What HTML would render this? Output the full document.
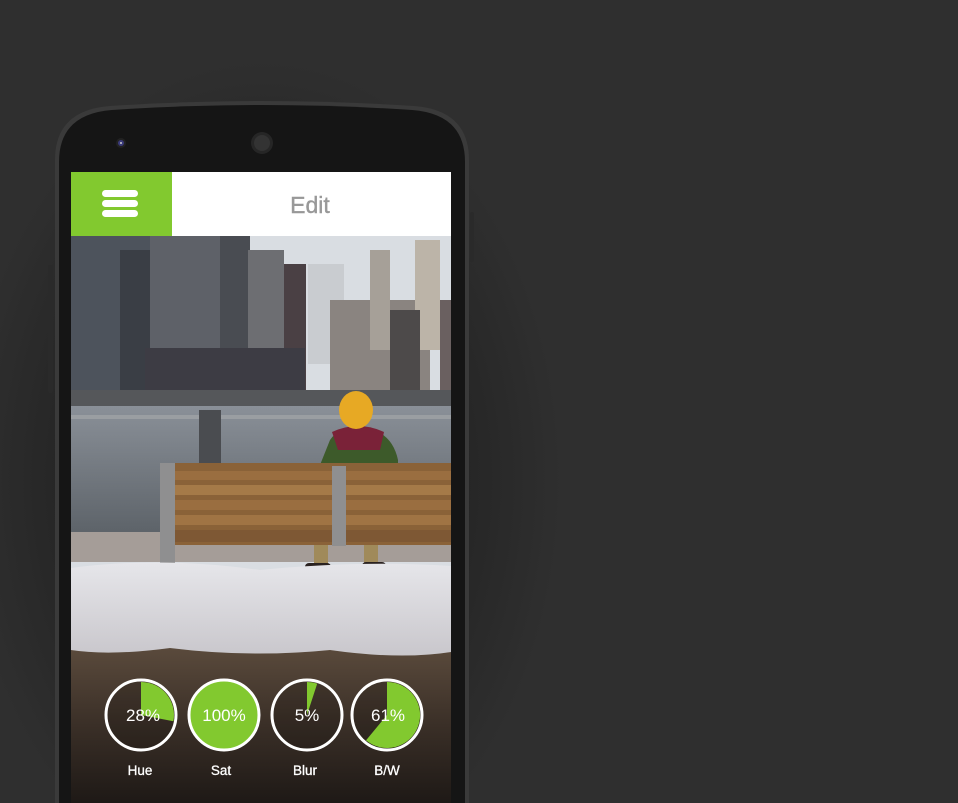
<!DOCTYPE html>
<html><head><style>
html,body{margin:0;padding:0;width:958px;height:803px;overflow:hidden;background:#2f2f2f;font-family:"Liberation Sans",sans-serif}
</style></head><body>
<svg width="958" height="803" viewBox="0 0 958 803" style="position:absolute;left:0;top:0">
<defs>
<radialGradient id="halo" cx="262" cy="480" r="1" gradientTransform="translate(262 480) scale(300 420) translate(-262 -480)" gradientUnits="userSpaceOnUse"><stop offset="0" stop-color="#1c1c1c"/><stop offset="0.6" stop-color="#242424"/><stop offset="1" stop-color="#2f2f2f"/></radialGradient>
<linearGradient id="ground" x1="0" y1="0" x2="0" y2="1"><stop offset="0" stop-color="#5a4a3c"/><stop offset="0.5" stop-color="#3a2f27"/><stop offset="1" stop-color="#1e1916"/></linearGradient>
<linearGradient id="water" x1="0" y1="0" x2="0" y2="1"><stop offset="0" stop-color="#8a9098"/><stop offset="1" stop-color="#5c6268"/></linearGradient>
<linearGradient id="snow" x1="0" y1="0" x2="0" y2="1"><stop offset="0" stop-color="#e6e6ea"/><stop offset="1" stop-color="#c9c7cc"/></linearGradient>
<clipPath id="scr"><rect x="71" y="236" width="380" height="567"/></clipPath>
</defs>
<rect width="958" height="803" fill="#2f2f2f"/>
<rect x="0" y="0" width="600" height="803" fill="url(#halo)"/>
<!-- phone -->
<path d="M55 803 V160 Q55 110 110 106 Q262 96 414 106 Q469 110 469 160 V803 Z" fill="#3a3a3a"/>
<path d="M59 803 V162 Q59 114 112 110 Q262 100 412 110 Q465 114 465 162 V803 Z" fill="#151515"/>
<rect x="48" y="265" width="5" height="128" rx="2" fill="#2a2a2a"/>
<rect x="470" y="212" width="4" height="50" rx="2" fill="#2a2a2a"/>
<circle cx="121" cy="143" r="5" fill="#222"/><circle cx="121" cy="143" r="3" fill="#3a3a7a"/><circle cx="121" cy="143" r="1" fill="#ccc"/>
<circle cx="262" cy="143" r="11" fill="#262626"/><circle cx="262" cy="143" r="8" fill="#333"/>
<!-- header -->
<rect x="71" y="172" width="380" height="64" fill="#fff"/>
<rect x="71" y="172" width="101" height="64" fill="#82c92f"/>
<rect x="102" y="190" width="36" height="7" rx="3.5" fill="#fff"/>
<rect x="102" y="200" width="36" height="7" rx="3.5" fill="#fff"/>
<rect x="102" y="210" width="36" height="7" rx="3.5" fill="#fff"/>
<text x="310" y="213" font-size="23" fill="#999" text-anchor="middle" font-family="Liberation Sans,sans-serif" stroke="#999" stroke-width="0.4">Edit</text>
<!-- photo -->
<g clip-path="url(#scr)">
<rect x="71" y="236" width="380" height="567" fill="#d9dde2"/>
<rect x="71" y="236" width="80" height="170" fill="#4d535c"/>
<rect x="120" y="250" width="30" height="150" fill="#3a3e45"/>
<rect x="150" y="236" width="98" height="170" fill="#5e6168"/>
<rect x="220" y="236" width="30" height="140" fill="#494c52"/>
<rect x="248" y="250" width="36" height="150" fill="#6d6e72"/>
<rect x="284" y="264" width="22" height="140" fill="#4a4044"/>
<rect x="308" y="264" width="36" height="100" fill="#c9ccd0"/>
<rect x="330" y="300" width="100" height="100" fill="#8a8480"/>
<rect x="370" y="250" width="20" height="100" fill="#a6a098"/>
<rect x="415" y="240" width="25" height="110" fill="#bcb4a8"/>
<rect x="390" y="310" width="30" height="80" fill="#4d4a4a"/>
<rect x="440" y="300" width="11" height="100" fill="#6a6060"/>
<rect x="145" y="348" width="160" height="50" fill="#3d3c44"/>
<rect x="71" y="390" width="380" height="16" fill="#55575a"/>
<rect x="71" y="406" width="380" height="130" fill="url(#water)"/>
<rect x="71" y="415" width="380" height="4" fill="#9a9ea2"/>
<rect x="199" y="410" width="22" height="55" fill="#4a4c50"/>
<path d="M330 440 Q340 425 365 428 Q392 432 398 460 L398 470 L318 470 Z" fill="#3d5a2a"/>
<path d="M332 432 Q358 420 384 432 L380 450 L338 450 Z" fill="#7a2238"/>
<ellipse cx="356" cy="410" rx="17" ry="19" fill="#e7a924"/>
<rect x="71" y="532" width="380" height="30" fill="#a59d98"/>
<rect x="160" y="463" width="291" height="82" fill="#8a6238"/>
<rect x="174" y="471" width="277" height="9" fill="#9a6e40"/>
<rect x="174" y="485" width="277" height="10" fill="#a57a48"/>
<rect x="174" y="500" width="277" height="10" fill="#9a6e40"/>
<rect x="174" y="515" width="277" height="10" fill="#a07444"/>
<rect x="174" y="530" width="277" height="12" fill="#7e5834"/>
<rect x="160" y="463" width="15" height="122" fill="#8f8f90"/>
<rect x="332" y="466" width="14" height="80" fill="#8f8f90"/>
<rect x="314" y="545" width="14" height="22" fill="#a08a5a"/>
<rect x="364" y="545" width="14" height="22" fill="#a08a5a"/>
<rect x="305" y="563" width="26" height="12" rx="4" fill="#2a2220"/>
<rect x="362" y="562" width="24" height="12" rx="4" fill="#2a2220"/>
<path d="M71 568 Q160 556 260 570 Q360 560 451 566 V652 Q400 660 330 650 Q250 658 170 648 Q110 656 71 650 Z" fill="url(#snow)"/>
<path d="M71 650 Q110 656 170 648 Q250 658 330 650 Q400 660 451 652 V803 H71 Z" fill="url(#ground)"/>
</g>
<!-- dials -->
<g stroke="#fff" stroke-width="3" fill="none">
<circle cx="141" cy="715" r="35" fill="rgba(0,0,0,0.15)"/>
<circle cx="224" cy="715" r="35" fill="#82c92f"/>
<circle cx="307" cy="715" r="35" fill="rgba(0,0,0,0.15)"/>
<circle cx="387" cy="715" r="35" fill="rgba(0,0,0,0.15)"/>
</g>
<path d="M141 715 L141 682 A33 33 0 0 1 173.4 721.2 Z" fill="#82c92f"/>
<path d="M307 715 L307 682 A33 33 0 0 1 317.2 683.6 Z" fill="#82c92f"/>
<path d="M387 715 L387 682 A33 33 0 1 1 366 740.4 Z" fill="#82c92f"/>
<g fill="#fff" font-size="17" text-anchor="middle" font-family="Liberation Sans,sans-serif">
<text x="143" y="721">28%</text>
<text x="224" y="721">100%</text>
<text x="307" y="721">5%</text>
<text x="388" y="721">61%</text>
</g>
<g fill="#fff" font-size="13.5" text-anchor="middle" font-family="Liberation Sans,sans-serif" stroke="#fff" stroke-width="0.3">
<text x="140" y="775">Hue</text>
<text x="221" y="775">Sat</text>
<text x="305" y="775">Blur</text>
<text x="387" y="775">B/W</text>
</g>
</svg>
</body></html>
